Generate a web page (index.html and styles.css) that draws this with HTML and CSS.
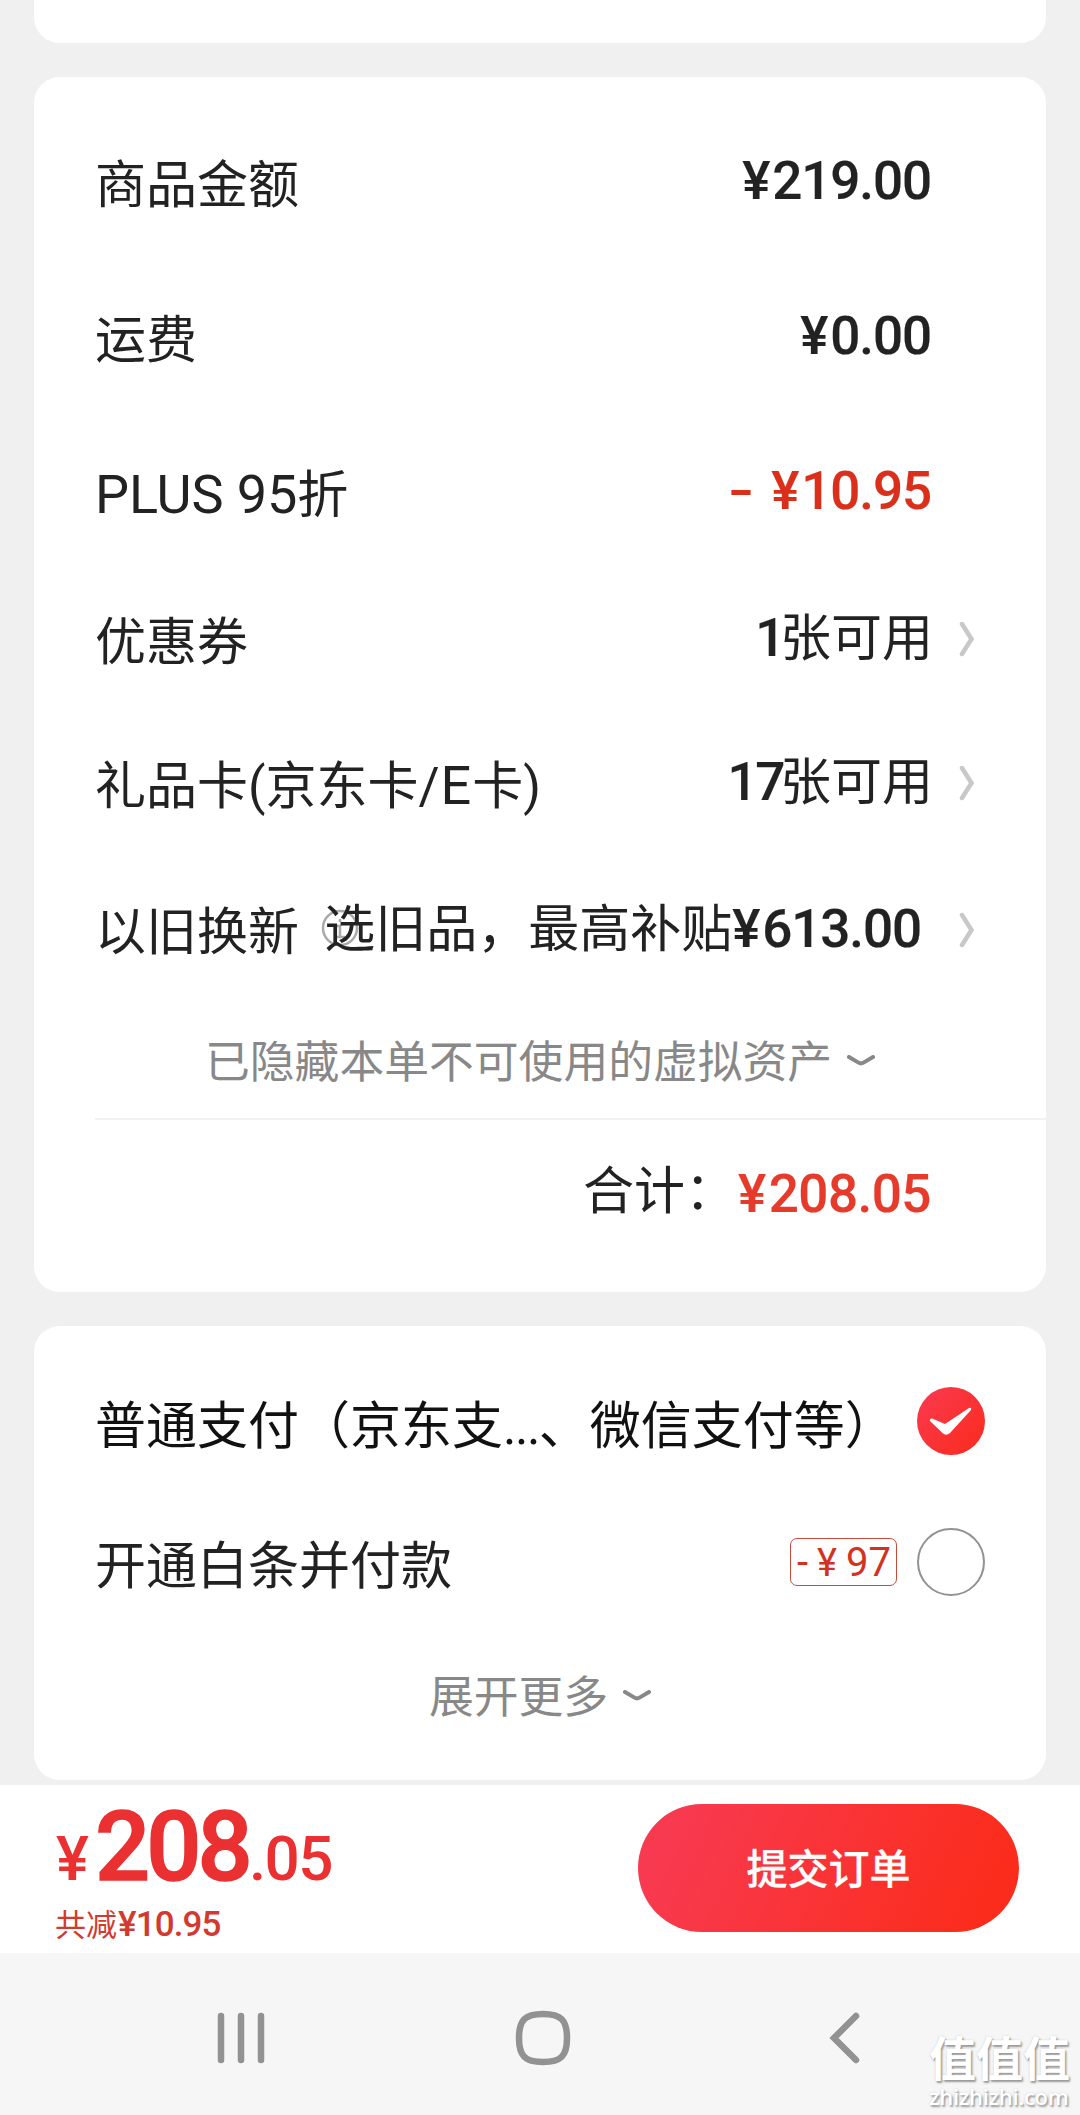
FILE: index.html
```html
<!DOCTYPE html>
<html lang="zh-CN">
<head>
<meta charset="utf-8">
<title>确认订单</title>
<link rel="stylesheet" href="styles.css">
</head>
<body>
<main class="page">
  <section class="card card-previous"></section>

  <section class="card card-amounts">
    <div class="row">
      <span class="label">商品金额</span>
      <span class="value"><b class="num"><span class="cny">¥</span>219.00</b></span>
    </div>
    <div class="row">
      <span class="label">运费</span>
      <span class="value"><b class="num"><span class="cny">¥</span>0.00</b></span>
    </div>
    <div class="row">
      <span class="label"><span class="latin">PLUS 95</span>折</span>
      <span class="value discount"><b class="dash">-</b><b class="num"><span class="cny">¥</span>10.95</b></span>
    </div>
    <div class="row row-coupon">
      <span class="label">优惠券</span>
      <span class="value"><b class="num num-count">1</b>张可用</span>
      <svg class="chevron" viewBox="0 0 16 36"><path d="M3 3 L12.5 18 L3 33"/></svg>
    </div>
    <div class="row row-gift">
      <span class="label">礼品卡(京东卡/<span class="latin-e">E</span>卡)</span>
      <span class="value"><b class="num num-count">17</b>张可用</span>
      <svg class="chevron" viewBox="0 0 16 36"><path d="M3 3 L12.5 18 L3 33"/></svg>
    </div>
    <div class="row row-trade">
      <span class="label">以旧换新
        <svg class="info" viewBox="0 0 38 38"><circle cx="19" cy="19" r="17"/><path d="M19 10v3M15 17h4v11M14 28h10"/></svg>
      </span>
      <span class="value value-trade">选旧品，最高补贴<b class="num"><span class="cny">¥</span>613.00</b></span>
      <svg class="chevron" viewBox="0 0 16 36"><path d="M3 3 L12.5 18 L3 33"/></svg>
    </div>
    <div class="toggle toggle-assets">
      <span>已隐藏本单不可使用的虚拟资产</span>
      <svg class="down" viewBox="0 0 28 12"><path d="M2 2 L11.5 7.6 Q14 9.2 16.5 7.6 L26 2"/></svg>
    </div>
    <div class="total">
      <span class="total-label">合计：</span>
      <b class="num total-num"><span class="cny">¥</span>208.05</b>
    </div>
  </section>

  <section class="card card-payment">
    <div class="pay pay-normal">
      <span class="pay-name">普通支付（京东支<span class="dots">...</span>、微信支付等）</span>
      <svg class="radio" viewBox="0 0 68 68">
        <defs><linearGradient id="tick" x1="0" y1="0" x2="1" y2="1"><stop offset="0" stop-color="#fa3a50"/><stop offset="1" stop-color="#fb2b1c"/></linearGradient></defs>
        <circle cx="34" cy="34" r="34" fill="url(#tick)"/>
        <path d="M13 34 Q12 31.5 15 31.5 L28 37 L52 21 Q55 20 54 23 L33 46 Q29 49.5 25.5 46 Z" fill="#fff"/>
      </svg>
    </div>
    <div class="pay pay-credit">
      <span class="pay-name">开通白条并付款</span>
      <span class="badge"><span>-</span><span class="badge-yen">¥</span><span>97</span></span>
      <span class="radio-empty"></span>
    </div>
    <div class="toggle toggle-more">
      <span>展开更多</span>
      <svg class="down" viewBox="0 0 28 12"><path d="M2 2 L11.5 7.6 Q14 9.2 16.5 7.6 L26 2"/></svg>
    </div>
  </section>

  <footer class="checkout">
    <div class="sum">
      <div class="price"><b class="yen">¥</b><b class="int">208</b><b class="dec">.05</b></div>
      <div class="saved">共减<b>¥10.95</b></div>
    </div>
    <button class="submit">提交订单</button>
  </footer>

  <nav class="navbar">
    <svg class="nav-recent" viewBox="0 0 48 52"><path d="M4 4v44M24 4v44M44 4v44"/></svg>
    <svg class="nav-home" viewBox="0 0 56 56"><path d="M28 4 C46 4 52 10 52 28 C52 46 46 52 28 52 C10 52 4 46 4 28 C4 10 10 4 28 4Z"/></svg>
    <svg class="nav-back" viewBox="0 0 32 52"><path d="M27 4 L5 26 L27 48"/></svg>
    <div class="watermark"><span class="wm-name">值值值</span><span class="wm-url">zhizhizhi.com</span></div>
  </nav>
</main>
</body>
</html>
```
FILE: styles.css
```css
* { box-sizing: border-box; }

body {
  margin: 0;
  background: #f0f0f0;
  color: #222;
  font-family: Roboto, "Noto Sans CJK SC", sans-serif;
}

.page {
  display: flex;
  flex-direction: column;
  width: 1080px;
  height: 2115px;
  overflow: hidden;
}

.card {
  flex: none;
  margin: 0 34px;
  background: #fff;
  border-radius: 26px;
}

.card-previous {
  height: 43px;
  border-radius: 0 0 26px 26px;
}

.card-amounts {
  height: 1215px;
  margin-top: 34px;
  padding: 27px 0 0 61px;
}

.card-payment {
  height: 454px;
  margin-top: 34px;
  padding: 29px 61px 0;
}

.row {
  display: flex;
  align-items: center;
  height: 155px;
  padding-right: 71px;
  font-size: 51px;
  line-height: 60px;
  white-space: nowrap;
}

.row-coupon { height: 139px; }
.row-gift { height: 148px; }
.row-trade { height: 146px; }

.label {
  position: relative;
  padding-top: 8px;
}

.latin { font-size: 54px; letter-spacing: -0.1px; }
.latin-e { font-size: 54px; margin: 0 1px; }

.value {
  position: relative;
  margin-left: auto;
  margin-right: 44px;
}

.row .chevron { margin-top: 1px; }
.row-coupon .value,
.row-gift .value { margin-right: 26px; }
.row-trade .value { margin-right: 38px; }

.num {
  font-weight: 500;
  font-size: 53px;
  letter-spacing: -1.1px;
  -webkit-text-stroke: 0.2px currentColor;
}

.num-count { letter-spacing: -2.4px; margin-right: -3px; }
.cny { margin-right: 3px; }

.discount { color: #d92f1b; }

.dash {
  display: inline-block;
  margin-right: 21px;
  font-size: 53px;
  font-weight: 500;
  transform: scaleX(1.4);
}

.chevron {
  flex: none;
  width: 16px;
  height: 36px;
  fill: none;
  stroke: #c8c8c8;
  stroke-width: 4.5;
  stroke-linecap: round;
}

.info {
  position: absolute;
  left: 226px;
  top: 14px;
  width: 38px;
  height: 38px;
  fill: none;
  stroke: #aaa;
  stroke-width: 2.5;
}

.toggle {
  display: flex;
  align-items: center;
  color: #888;
  font-size: 44.8px;
  line-height: 60px;
}

.down {
  width: 28px;
  height: 12px;
  margin-left: 15px;
  fill: none;
  stroke: #888;
  stroke-width: 4;
  stroke-linecap: round;
}

.toggle-assets {
  height: 118px;
  padding: 6px 0 0 110px;
  border-bottom: 2px solid #f2f2f2;
}

.toggle .down { margin-bottom: 4px; }

.total {
  display: flex;
  justify-content: flex-end;
  align-items: center;
  height: 143px;
  padding-right: 115px;
  font-size: 51px;
  line-height: 60px;
}

.total-num { margin-left: 2px; letter-spacing: -0.5px; color: #e63a2a; padding-top: 4px; }

.pay {
  display: flex;
  align-items: center;
  height: 132px;
  font-size: 51px;
  line-height: 60px;
  white-space: nowrap;
}

.pay-credit { height: 150px; }
.pay-name { flex: 1; padding-top: 12px; }
.pay-credit .pay-name { padding-top: 9px; }
.dots { letter-spacing: -1.5px; }
.pay-normal { color: #111; }

.radio, .radio-empty {
  flex: none;
  width: 68px;
  height: 68px;
}

.radio-empty {
  border: 2.5px solid #929292;
  border-radius: 50%;
}

.badge {
  display: flex;
  align-items: center;
  justify-content: space-between;
  width: 107px;
  height: 48px;
  margin-right: 20px;
  padding: 1px 5px 0 6px;
  border: 1.5px solid #c94a3c;
  border-radius: 7px;
  color: #d3321f;
  font-size: 40px;
  line-height: 44px;
}

.badge-yen { font-size: 38px; }

.toggle-more {
  justify-content: center;
  height: 121px;
}

.checkout {
  display: flex;
  flex: none;
  justify-content: space-between;
  height: 168px;
  margin-top: 5px;
  padding: 19px 61px 0 55px;
  background: #fff;
}

.price {
  display: flex;
  align-items: baseline;
  height: 101px;
  padding-top: 1px;
  color: #eb3031;
  line-height: 84px;
  white-space: nowrap;
}

.price b { font-weight: 500; }
.yen, .dec { font-size: 62px; }
.yen { margin: 0 6px 0 1px; }
.price .int { font-size: 97px; letter-spacing: -3.8px; -webkit-text-stroke: 1.5px currentColor; }
.dec { letter-spacing: -1.6px; }

.saved {
  height: 40px;
  color: #d23a30;
  font-size: 31px;
  line-height: 40px;
  white-space: nowrap;
}

.saved b { margin-left: 1px; font-size: 35px; font-weight: 500; letter-spacing: -0.9px; }

.submit {
  width: 381px;
  height: 128px;
  padding: 0 0 5px;
  border: 0;
  border-radius: 64px;
  background: linear-gradient(115deg, #f83a50 10%, #fb2c1b 90%);
  color: #fff;
  font: 500 41px/60px "Noto Sans CJK SC", sans-serif;
  -webkit-text-stroke: 0.3px #fff;
}

.navbar {
  position: relative;
  flex: none;
  display: flex;
  align-items: flex-start;
  height: 162px;
  padding: 57px 0 0 217px;
  background: #f6f6f6;
}

.navbar svg {
  fill: none;
  stroke: #929292;
  stroke-width: 6.5;
  stroke-linecap: round;
}

.nav-recent { width: 48px; height: 56px; }
.nav-home { width: 56px; height: 56px; margin-left: 250px; }
.nav-back { width: 32px; height: 56px; margin-left: 258px; }

.watermark {
  position: absolute;
  left: 929px;
  top: 75px;
  display: flex;
  flex-direction: column;
  color: #fff;
  text-shadow: 1.5px 1.5px 2px #999, 0 0 2px #ccc;
  white-space: nowrap;
}

.wm-name { font: 700 47px/56px "Noto Sans CJK SC", sans-serif; }
.wm-url { font: 600 22px/24px "Open Sans", sans-serif; letter-spacing: -0.3px; }
```
